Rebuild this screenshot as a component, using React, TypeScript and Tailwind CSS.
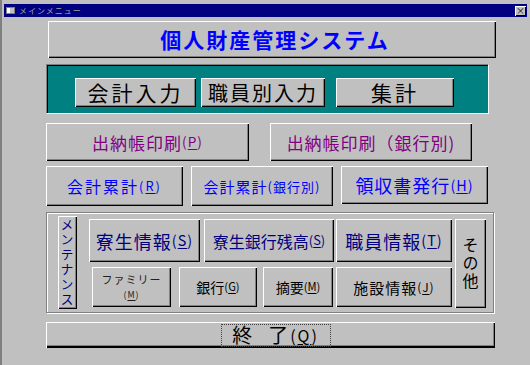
import React from 'react';

const font = "font-['Noto_Sans_CJK_JP','Noto_Sans',sans-serif]";
const raised =
  'bg-[#c0c0c0] shadow-[inset_1px_1px_0_#ffffff,inset_-1px_-1px_0_#000000,inset_-2px_-2px_0_#808080]';

const Btn = ({ className = '', children }: { className?: string; children: React.ReactNode }) => (
  <div className={`${raised} flex shrink-0 items-center justify-center whitespace-nowrap ${className}`}>
    {children}
  </div>
);

const Key = ({ k }: { k: string }) => (
  <span className="text-[0.8em]">
    (<span className="underline underline-offset-2">{k}</span>)
  </span>
);

const App: React.FC = () => {
  return (
    <div className={`${font} w-[530px] h-[365px] bg-[#c0c0c0] border-l-2 border-[#808080] overflow-hidden`}>
      {/* title bar */}
      <div className="mt-[4px] ml-[2px] w-[523px] h-[13px] bg-[#000080] flex items-center pl-[2px] pr-[1px]">
        <div className="w-[9px] h-[7px] bg-[#c0c0c0] border border-[#808080] flex">
          <div className="w-[3px] h-full bg-white" />
        </div>
        <span className="ml-[4px] text-[8px] leading-none text-[#a0a0a0] tracking-[1px]">メインメニュー</span>
        <div className="ml-auto w-[11px] h-[10px] bg-[#c0c0c0] shadow-[inset_1px_1px_0_#ffffff,inset_-1px_-1px_0_#000000] flex items-center justify-center text-[9px] leading-none text-black">
          ×
        </div>
      </div>

      <div className="pl-[44px]">
        {/* system title */}
        <Btn className="mt-[4px] ml-[2px] w-[448px] h-[37px] text-[21px] leading-none font-bold text-[#0000ff] tracking-[2px] pl-[6px]">
          個人財産管理システム
        </Btn>

        {/* teal panel */}
        <div className="mt-[6px] w-[443px] h-[50px] bg-[#008080] border-t border-l border-[#808080] border-b border-r border-b-white border-r-white shadow-[inset_1px_1px_0_#000000] flex pt-[13px] pl-[28px]">
          <Btn className="w-[121px] h-[29px] text-[21px] leading-none text-black tracking-[3px]">会計入力</Btn>
          <Btn className="ml-[5px] w-[124px] h-[29px] text-[20px] leading-none text-black tracking-[2px]">職員別入力</Btn>
          <Btn className="ml-[11px] w-[118px] h-[29px] text-[21px] leading-none text-black tracking-[3px]">集計</Btn>
        </div>

        {/* print row */}
        <div className="mt-[9px] flex">
          <Btn className="w-[203px] h-[38px] text-[17px] leading-none text-[#800080] tracking-[1px]">
            出納帳印刷<Key k="P" />
          </Btn>
          <Btn className="ml-[21px] w-[202px] h-[38px] text-[17px] leading-none text-[#800080] tracking-[1px]">
            出納帳印刷（銀行別)
          </Btn>
        </div>

        {/* totals row */}
        <div className="mt-[5px] flex items-start">
          <Btn className="w-[137px] h-[40px] text-[16px] leading-none text-[#0000ff] tracking-[2px]">
            会計累計<Key k="R" />
          </Btn>
          <Btn className="ml-[8px] w-[142px] h-[40px] text-[15px] leading-none text-[#0000ff] tracking-[1px]">
            会計累計<span className="text-[13px]">(銀行別)</span>
          </Btn>
          <Btn className="ml-[8px] w-[147px] h-[38px] text-[18px] leading-none text-[#0000ff] tracking-[1px]">
            領収書発行<Key k="H" />
          </Btn>
        </div>

        {/* maintenance group */}
        <div className="mt-[6px] w-[448px] h-[101px] border border-[#808080] shadow-[inset_1px_1px_0_#ffffff,1px_1px_0_#ffffff] flex items-start">
          <div className="ml-[11px] mt-[3px] w-[19px] h-[93px] bg-[#c0c0c0] shadow-[inset_1px_1px_0_#ffffff,inset_-1px_-1px_0_#000000,inset_-2px_-2px_0_#808080] flex items-center justify-center">
            <span className="[writing-mode:vertical-rl] text-[13px] leading-none tracking-[2px] text-[#000080] pr-[1px]">
              メンテナンス
            </span>
          </div>
          <div className="ml-[12px] mt-[6px] flex flex-col">
            <div className="flex">
              <Btn className="w-[111px] h-[43px] text-[18px] leading-none text-[#000080] tracking-[1px]">
                寮生情報<Key k="S" />
              </Btn>
              <Btn className="ml-[4px] w-[130px] h-[43px] text-[16px] leading-none text-[#000080]">
                寮生銀行残高<Key k="S" />
              </Btn>
              <Btn className="ml-[2px] w-[116px] h-[43px] text-[18px] leading-none text-[#000080] tracking-[1px]">
                職員情報<Key k="T" />
              </Btn>
            </div>
            <div className="mt-[5px] flex">
              <Btn className="ml-[3px] w-[79px] h-[40px] text-[11px] leading-[14px] text-[#202020] tracking-[1px] text-center whitespace-normal">
                <span>
                  ファミリー
                  <br />
                  <Key k="M" />
                </span>
              </Btn>
              <Btn className="ml-[8px] w-[78px] h-[40px] text-[14px] leading-none text-black">
                銀行<Key k="G" />
              </Btn>
              <Btn className="ml-[6px] w-[70px] h-[40px] text-[14px] leading-none text-black">
                摘要<Key k="M" />
              </Btn>
              <Btn className="ml-[3px] w-[116px] h-[40px] text-[15px] leading-none text-black tracking-[1px]">
                施設情報<Key k="J" />
              </Btn>
            </div>
          </div>
          <Btn className="ml-[3px] mt-[6px] w-[31px] h-[89px]">
            <span className="[writing-mode:vertical-rl] text-[16px] leading-none tracking-[2px] text-black">
              その他
            </span>
          </Btn>
        </div>

        {/* exit */}
        <div className="mt-[9px] w-[449px] h-[26px] bg-[#c0c0c0] shadow-[inset_1px_1px_0_#ffffff,inset_-1px_-2px_0_#000000,inset_-2px_-3px_0_#808080] flex items-center justify-center">
          <div className="ml-[10px] w-[110px] border border-dotted border-[#404040] h-[23px] flex items-center justify-center text-[20px] leading-none text-black tracking-[2px]">
            終<span className="ml-[14px]">了</span>
            <Key k="Q" />
          </div>
        </div>
      </div>
    </div>
  );
};

export default App;
